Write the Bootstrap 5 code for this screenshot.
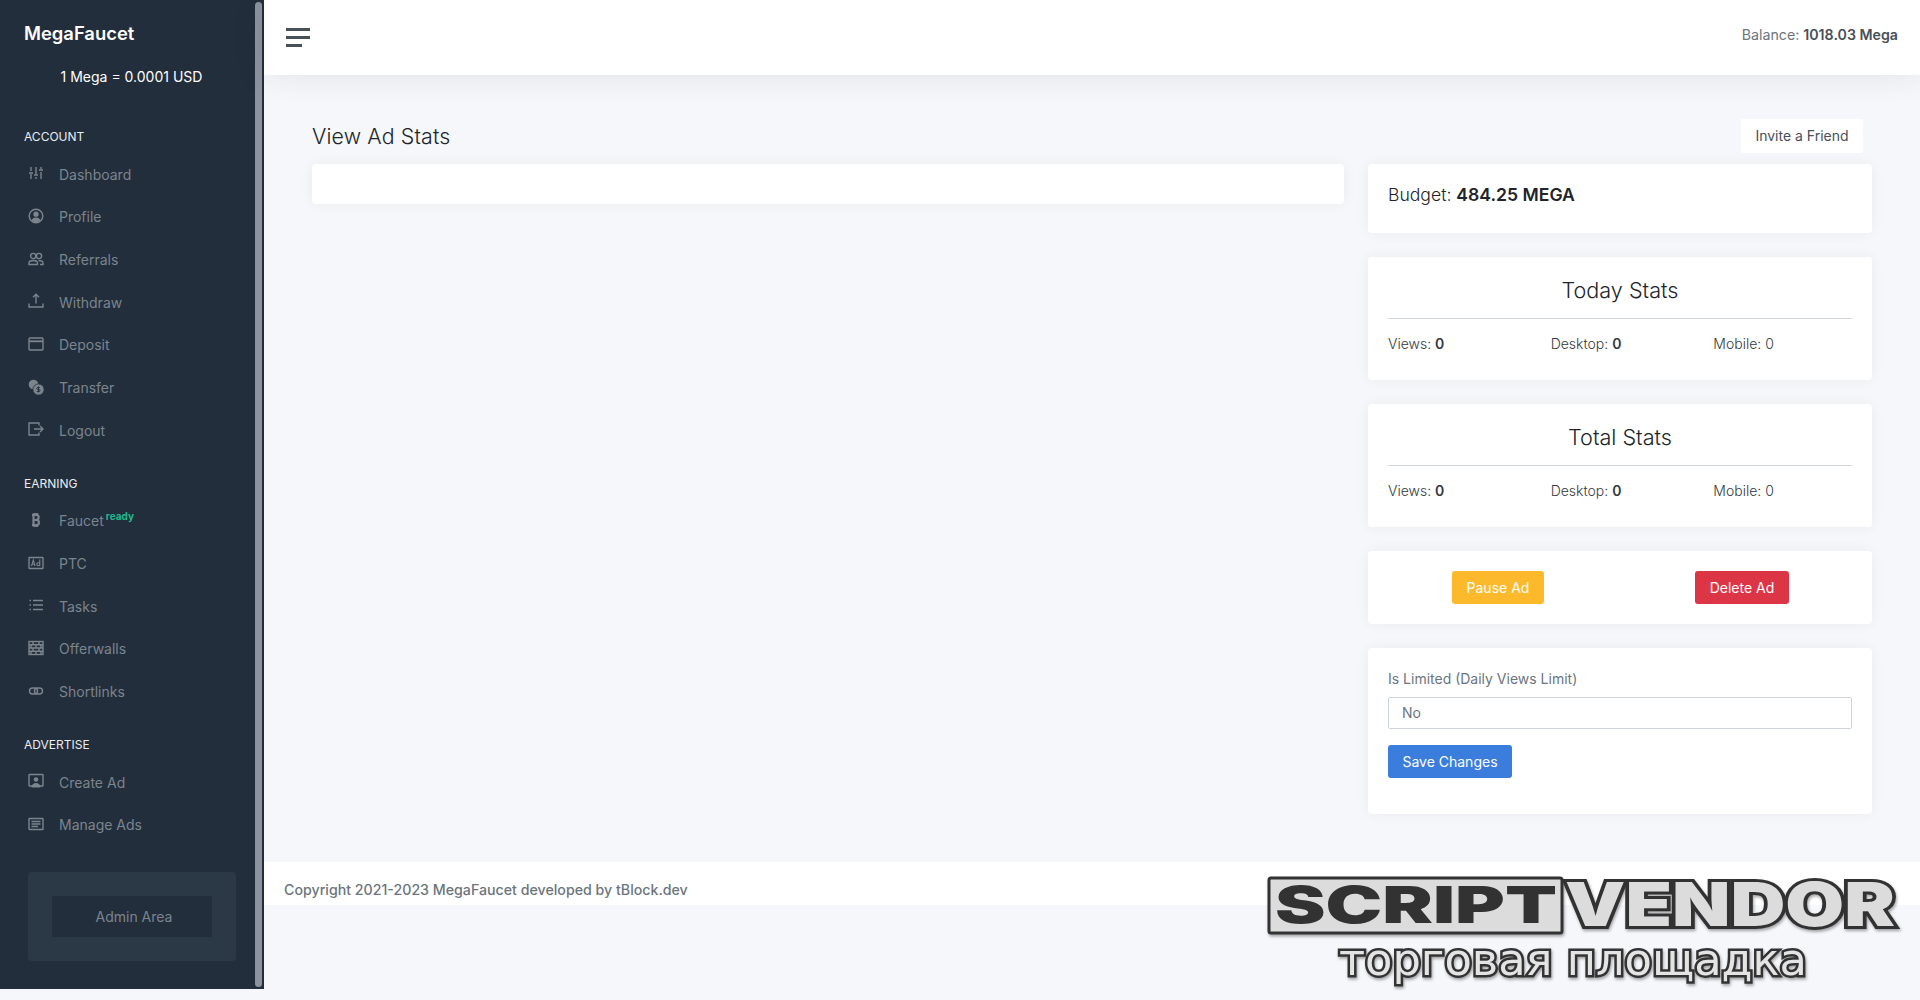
<!DOCTYPE html>
<html lang="en">
<head>
<meta charset="utf-8">
<title>View Ad Stats</title>
<link href="https://cdn.jsdelivr.net/npm/bootstrap@5.3.0/dist/css/bootstrap.min.css" rel="stylesheet">
<style>
html,body{height:1000px;overflow:hidden}
body{font-family:Inter,"Liberation Sans",sans-serif;font-size:14px;line-height:1.5;background:#f5f7fb;color:#495057}
.shell{height:1000px;position:relative}
.side{width:264px;height:989px;background:#222e3c;flex:none}
.side-in{flex:1;min-width:0}
.sbar-col{width:9px;flex:none;padding:2px 2px 2px 0}
.sbar{width:7px;height:100%;background:#8d939d;border-radius:4px}
.brand{padding:22px 24px 0;color:#fff;font-size:18.4px;font-weight:600;line-height:22px;height:44px}
.rate{color:#fff;text-align:center;height:21px;line-height:21px;margin-top:22px;padding-left:8px;font-size:14px}
.sec{color:#e9ecef;font-size:12px;line-height:18px;padding-left:24px}
.sec.s1{margin-top:41px;margin-bottom:7px}
.sec.s2{margin-top:23px;margin-bottom:7px}
.item{height:42.67px;display:flex;align-items:center;padding-left:28px;color:#7c848d;text-decoration:none}
.item svg{width:16px;height:16px;flex:none;margin-right:15px;margin-top:-2px;fill:none;stroke:#7c848d;stroke-width:1.4}
.item svg .f{fill:#7c848d;stroke:none}
.rdy{color:#1cbb8c;font-size:10px;font-weight:700;align-self:flex-start;line-height:12px;margin-top:10px;margin-left:2px}
.cta{margin:26px 0 0 28px;width:208px;height:89px;background:#2b3947;border-radius:4px;padding:24px}
.cta-in{background:#222e3c;height:41px;display:flex;align-items:center;justify-content:center;color:#7c848d;padding-left:4px}
.main-col{flex:1;min-width:0}
.topb{height:75px;background:#fff;box-shadow:0 0 2rem 0 rgba(33,37,41,.1);padding:0 22px;position:relative}
.burger{width:24px;display:block}
.burger i{display:block;height:3px;background:#495057;margin-bottom:5px;width:24px}
.burger i:last-child{width:16px;margin-bottom:0}
.bal{color:#6c757d;font-size:14.2px;padding-bottom:6px}
.bal strong{color:#495057;font-weight:600}
.body-p{padding:44px 48px 0;height:787px}
.ttl{font-size:21.3px;font-weight:350;color:#212529;margin:0;line-height:34px;letter-spacing:.15px}
.btn-inv{background:#fff;border:0;border-radius:2px;color:#495057;font-size:14px;height:34px;width:122px;margin-right:9px;padding:0 0 2px;display:block}
.headr{margin-bottom:11px}
.tile{background:#fff;border:0;border-radius:4px;box-shadow:0 0 .875rem 0 rgba(33,37,41,.05);margin-bottom:24px}
.tile-e{height:40px}
.tile-b{padding:20px}
.bud{font-size:17.6px;font-weight:350;color:#212529;line-height:21.6px;margin:0 0 7px}
.bud strong{font-weight:600}
.st-t{font-size:21.6px;font-weight:300;color:#212529;text-align:center;line-height:26px;margin:0}
.st-hr{border-top:1px solid #ced4da;margin:15px 0 14px;opacity:1}
.st-r{font-size:14px;font-weight:300;color:#343a40;height:27px}
.st-r strong{font-weight:600}
.tbtn{font-size:14px;height:33px;padding:0 14px;border:0;border-radius:3px;color:#fff;line-height:33px}
.tbtn.pa{background:#fcb92c;width:92px}
.tbtn.de{background:#dc3545;width:94px}
.tbtn.sa{background:#3b7ddd;width:124px;display:block}
.lbl{color:#6c757d;font-size:14px;font-weight:400;line-height:21px;margin-bottom:8px;display:block}
.inp{height:32px;border:1px solid #ced4da;border-radius:2px;padding:0 13px;font-size:14px;color:#6c757d;line-height:30px;margin-bottom:16px;background:#fff}
.foot{height:43px;background:#fff;padding:12px 0 0 20px;color:#6c757d;font-weight:500;display:flex;align-items:center;line-height:21px;font-size:14.2px}
.mark-over{position:absolute;left:1264px;top:872px;width:644px;height:116px;overflow:visible}
.mark-over text{font-family:Inter,"DejaVu Sans",sans-serif;font-weight:900}
.mark-over .ru{font-family:"DejaVu Sans",sans-serif;font-weight:400}
</style>
</head>
<body>
<div class="shell d-flex">
  <nav class="side d-flex">
    <div class="side-in">
      <div class="brand">MegaFaucet</div>
      <div class="rate">1 Mega = 0.0001 USD</div>
      <div class="sec s1">ACCOUNT</div>
      <a class="item" href="#"><svg viewBox="0 0 16 16"><path d="M3 2v4M3 9v5M8 2v7M8 12v2M13 2v2M13 7v7M1 8h4M6 10h4M11 5h4"/></svg>Dashboard</a>
      <a class="item" href="#"><svg viewBox="0 0 16 16"><circle cx="8" cy="8" r="6.8"/><circle class="f" cx="8" cy="6.2" r="2.6"/><path class="f" d="M3.5 12.2c1-2 2.7-2.7 4.5-2.7s3.5.7 4.5 2.7c-1.2 1.2-2.8 1.9-4.5 1.9s-3.3-.7-4.5-1.9z"/></svg>Profile</a>
      <a class="item" href="#"><svg viewBox="0 0 16 16"><circle cx="5.2" cy="5" r="2.6"/><circle cx="11" cy="5" r="2.6"/><path d="M1 13.5v-1.5c0-1.500 1.500-2.500 4.200-2.500s4.300 1 4.300 2.500v1.500zM10.500 9.500c3 0 4.500 1 4.500 2.500v1.500h-3"/></svg>Referrals</a>
      <a class="item" href="#"><svg viewBox="0 0 16 16"><path d="M1 10.500v3.500h14v-3.500M8 10.500v-9M5 4.300l3-3 3 3"/></svg>Withdraw</a>
      <a class="item" href="#"><svg viewBox="0 0 16 16"><rect x="1" y="2" width="14" height="12" rx="1"/><path d="M1 5.300h14" stroke-width="1.8"/></svg>Deposit</a>
      <a class="item" href="#"><svg viewBox="0 0 16 16"><circle class="f" cx="5.500" cy="5.500" r="4.800"/><circle cx="10.500" cy="10.500" r="5.600" fill="#7c848d" stroke="#222e3c" stroke-width=".8"/><path d="M12 8.500h-2.300a1 1 0 0 0 0 2h1.300a1 1 0 0 1 0 2h-2.300M10.500 7.500v6" stroke="#222e3c" stroke-width=".9"/></svg>Transfer</a>
      <a class="item" href="#"><svg viewBox="0 0 16 16"><path d="M11 4.500v-2.500h-10v12h10v-2.500M6 8h9M12 5l3 3-3 3"/></svg>Logout</a>
      <div class="sec s2">EARNING</div>
      <a class="item" href="#"><svg viewBox="0 0 16 16"><path stroke-width="2.200" d="M5.500 2.800h3c2.800 0 2.800 4.800 0 5c3.200 0 3.200 5.400 0 5.400h-3zM5.500 8h3M6.500 1v2M9 1v2M6.500 13v2M9 13v2M4 2.800h2M4 13.200h2"/></svg>Faucet<span class="rdy">ready</span></a>
      <a class="item" href="#"><svg viewBox="0 0 16 16"><rect x="1" y="2.500" width="14" height="11" rx=".5"/><path stroke-width="1.100" d="M3.500 11l1.800-6 1.700 6M4 9.200h2.600M11.800 4.500v6.500M11.800 8.600c-.6-1.300-3-1.200-3 .6s2.400 1.900 3 .6"/></svg>PTC</a>
      <a class="item" href="#"><svg viewBox="0 0 16 16"><path d="M5 3.500h10M5 8h10M5 12.500h10M1.500 3.500h1.500M1.500 8h1.500M1.500 12.500h1.500"/></svg>Tasks</a>
      <a class="item" href="#"><svg viewBox="0 0 16 16"><rect x="1" y="1.500" width="14" height="13"/><path d="M1 4.700h14M1 8h14M1 11.300h14M5 1.500v3.200M11 1.500v3.200M3 4.700v3.300M8 4.700v3.300M13 4.700v3.300M5 8v3.300M11 8v3.300M3 11.300v3.200M8 11.300v3.200M13 11.300v3.200"/></svg>Offerwalls</a>
      <a class="item" href="#"><svg viewBox="0 0 16 16"><rect x="1.500" y="5" width="8" height="6" rx="3"/><rect x="6.500" y="5" width="8" height="6" rx="3"/></svg>Shortlinks</a>
      <div class="sec s2">ADVERTISE</div>
      <a class="item" href="#"><svg viewBox="0 0 16 16"><rect x="1" y="1.500" width="14" height="11.500" rx=".5"/><circle class="f" cx="8" cy="6.500" r="2.300"/><path class="f" d="M3.500 14.500c0-3 2-4.500 4.500-4.500s4.500 1.500 4.500 4.500z"/></svg>Create Ad</a>
      <a class="item" href="#"><svg viewBox="0 0 16 16"><rect x="1" y="2.500" width="14" height="11" rx=".5"/><path d="M3.500 5.500h9M3.500 8h9M3.500 10.500h6.500"/></svg>Manage Ads</a>
      <div class="cta"><div class="cta-in">Admin Area</div></div>
    </div>
    <div class="sbar-col"><div class="sbar"></div></div>
  </nav>
  <div class="main-col d-flex flex-column">
    <header class="topb d-flex align-items-center justify-content-between">
      <span class="burger"><i></i><i></i><i></i></span>
      <span class="bal">Balance: <strong>1018.03 Mega</strong></span>
    </header>
    <main class="body-p">
      <div class="headr d-flex justify-content-between align-items-center">
        <h1 class="ttl">View Ad Stats</h1>
        <button class="btn-inv" type="button">Invite a Friend</button>
      </div>
      <div class="row">
        <div class="col-8"><div class="tile tile-e"></div></div>
        <div class="col-4">
          <div class="tile tile-b"><h4 class="bud">Budget: <strong>484.25 MEGA</strong></h4></div>
          <div class="tile tile-b">
            <h3 class="st-t">Today Stats</h3>
            <hr class="st-hr">
            <div class="row st-r"><div class="col-4">Views: <strong>0</strong></div><div class="col-4">Desktop: <strong>0</strong></div><div class="col-4">Mobile: 0</div></div>
          </div>
          <div class="tile tile-b">
            <h3 class="st-t">Total Stats</h3>
            <hr class="st-hr">
            <div class="row st-r"><div class="col-4">Views: <strong>0</strong></div><div class="col-4">Desktop: <strong>0</strong></div><div class="col-4">Mobile: 0</div></div>
          </div>
          <div class="tile tile-b">
            <div class="row text-center">
              <div class="col-6"><button class="tbtn pa" type="button">Pause Ad</button></div>
              <div class="col-6"><button class="tbtn de" type="button">Delete Ad</button></div>
            </div>
          </div>
          <div class="tile tile-b">
            <label class="lbl">Is Limited (Daily Views Limit)</label>
            <div class="inp">No</div>
            <button class="tbtn sa" type="button">Save Changes</button>
            <div class="pt-3"></div>
          </div>
        </div>
      </div>
    </main>
    <footer class="foot">Copyright 2021-2023 MegaFaucet developed by tBlock.dev</footer>
  </div>
  <svg class="mark-over" viewBox="0 0 644 116" aria-label="ScriptVendor">
    <defs><filter id="sh" x="-5%" y="-10%" width="110%" height="130%"><feDropShadow dx="1" dy="2" stdDeviation="1.5" flood-color="#000" flood-opacity=".35"/></filter></defs>
    <g filter="url(#sh)">
      <rect x="5" y="6" width="293" height="55" rx="2" fill="#dcdcdc" stroke="#333" stroke-width="3"/>
      <text x="11" y="51" font-size="51" textLength="282" lengthAdjust="spacingAndGlyphs" fill="#333">SCRIPT</text>
      <text x="301" y="54" font-size="60" textLength="330" lengthAdjust="spacingAndGlyphs" fill="#dcdcdc" stroke="#333" stroke-width="6" paint-order="stroke">VENDOR</text>
      <text class="ru" x="75" y="103" font-size="44" textLength="468" lengthAdjust="spacingAndGlyphs" fill="#e4e4e4" stroke="#333" stroke-width="5" paint-order="stroke">торговая площадка</text>
    </g>
  </svg>
</div>
<script src="https://cdn.jsdelivr.net/npm/bootstrap@5.3.0/dist/js/bootstrap.bundle.min.js"></script>
</body>
</html>
